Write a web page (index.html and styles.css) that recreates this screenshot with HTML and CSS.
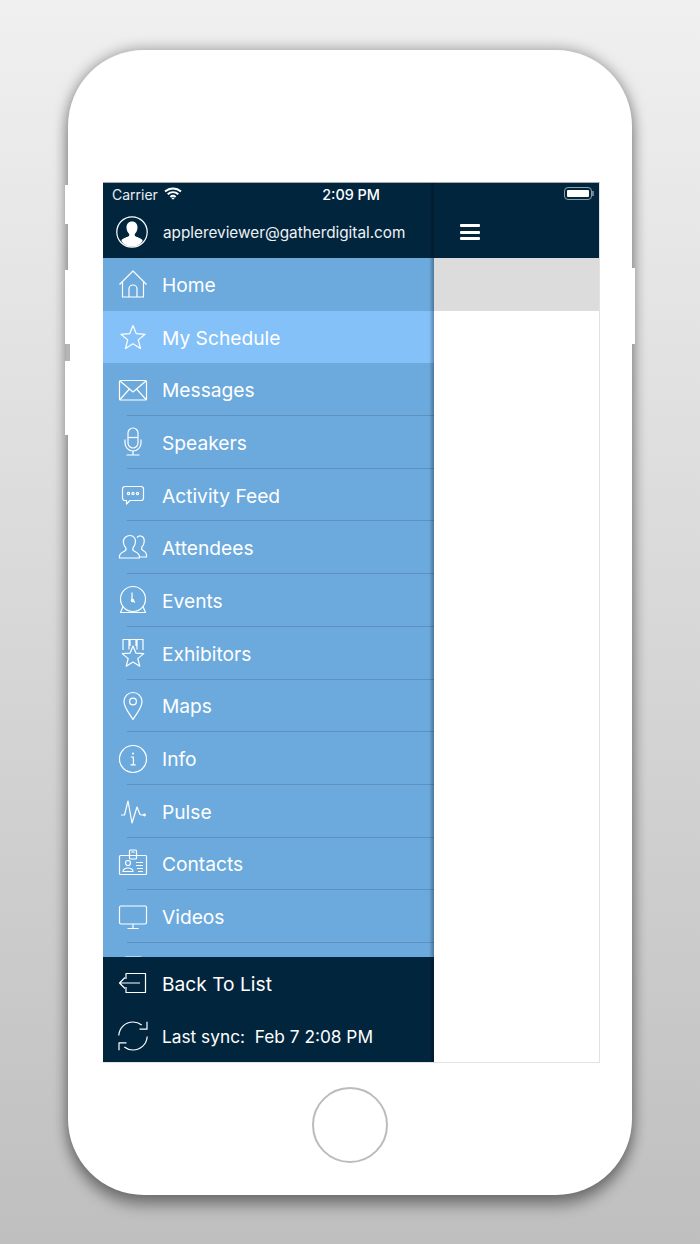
FILE: index.html
```html
<!DOCTYPE html>
<html lang="en">
<head>
  <meta charset="UTF-8" />
  <meta name="viewport" content="width=device-width, initial-scale=1.0"/>
  <title>Gather Digital menu</title>
  <link rel="stylesheet" href="styles.css">
</head>
<body>

<div class="phone">
  <span class="side-btn btn-mute"></span>
  <span class="side-btn btn-up"></span>
  <span class="side-btn btn-gap"></span>
  <span class="side-btn btn-down"></span>
  <span class="side-btn btn-power"></span>

  <div class="screen">

    <div class="drawer">
      <div class="drawer-head">
        <div class="status">
          <span>Carrier</span>
          <svg class="wifi" viewBox="0 0 18 13"><path d="M1 4.600C5.600.4 12.400.4 17 4.600" /><path d="M3.700 7.300c3.100-2.800 7.500-2.800 10.600 0" /><path d="M6.400 9.900c1.500-1.300 3.700-1.300 5.200 0" /><path class="fill" d="M9 12.800l-1.600-1.700c1-.7 2.200-.7 3.200 0z" /></svg>
          <span class="time">2:09 PM</span>
        </div>
        <div class="user">
          <svg class="avatar" viewBox="0 0 32 32"><circle class="ring" cx="16" cy="16" r="15.200" /><path class="fill" d="M16 5.500c-3.500 0-5.700 2.700-5.500 6.300.1 2.500 1.100 4.700 2.500 6 .5.700.4 1.900-.4 2.400-2 1.100-6.300 2-7.100 4.100-.1.400 0 1 .4 1.400C8.200 29.200 12 30.800 16 30.800s7.800-1.600 10.100-5.100c.4-.4.500-1 .4-1.400-.8-2.100-5.100-3-7.100-4.100-.8-.5-.9-1.700-.4-2.400 1.400-1.300 2.400-3.500 2.500-6 .2-3.600-2-6.300-5.500-6.300z" /></svg>
          <span>applereviewer@gatherdigital.com</span>
        </div>
      </div>

      <ul class="menu">
        <li class="item plain">
          <svg class="icon" viewBox="0 0 30 30"><path d="M1.500 15.500L15 2l13.500 13.500" /><path d="M4.500 12.500v15.500h21V12.500" /><path d="M11 28V20a4 4 0 0 1 8 0v8" /></svg>
          <span>Home</span>
        </li>
        <li class="item plain active">
          <svg class="icon" viewBox="0 0 30 30"><path d="M15 3.500l3.300 8.200 8.800.6-6.800 5.600 2.200 8.600-7.500-4.700-7.500 4.700 2.200-8.600-6.800-5.600 8.800-.6z" /></svg>
          <span>My Schedule</span>
        </li>
        <li class="item">
          <svg class="icon" viewBox="0 0 30 30"><rect x="1.500" y="5.500" width="27" height="19.500" rx="1" /><path d="M2 6l13 11L28 6" /><path d="M2 24.500l9.500-10.500M28 24.500L18.500 14" /></svg>
          <span>Messages</span>
        </li>
        <li class="item">
          <svg class="icon" viewBox="0 0 30 30"><rect x="10" y="1" width="10" height="20" rx="5" /><path d="M10 10.500h10" /><path d="M7 12.500v3.500a8 8 0 0 0 16 0v-3.500" /><path d="M15 24v4M8.500 28h13" /></svg>
          <span>Speakers</span>
        </li>
        <li class="item">
          <svg class="icon" viewBox="0 0 30 30"><path d="M7 6.500h16a2.500 2.500 0 0 1 2.500 2.500v9A2.500 2.500 0 0 1 23 20.500H12l-3.500 3.500v-3.500H7A2.500 2.500 0 0 1 4.500 18V9A2.500 2.500 0 0 1 7 6.500z" /><circle cx="10.500" cy="13.500" r="1.100" /><circle cx="15" cy="13.500" r="1.100" /><circle cx="19.500" cy="13.500" r="1.100" /></svg>
          <span>Activity Feed</span>
        </li>
        <li class="item">
          <svg class="icon" viewBox="0 0 30 30"><path d="M19 4.500c1-1.200 2.400-1.800 3.800-1.500 3 .5 3.800 3.500 3.300 6.500-.3 2-1.200 3.800-2.300 4.800-.5 1.200-.2 2.400 1 3 1.400.8 3.400 2 3.700 4.200v2.500h-7" /><path d="M12 2.500c3.700 0 5.900 3 5.400 7-.3 2.300-1.200 4-2.300 5.200-.6 1.300-.2 2.700 1 3.400 2 1.100 4.700 2.200 5.200 4.400V25H1.500v-2.500c.5-2.200 3.200-3.300 5.200-4.400 1.200-.7 1.600-2.100 1-3.400C6.600 13.500 5.700 11.800 5.400 9.500c-.5-4 2.900-7 6.600-7z" /></svg>
          <span>Attendees</span>
        </li>
        <li class="item">
          <svg class="icon" viewBox="0 0 30 30"><circle cx="15" cy="14" r="12.500" /><path d="M5 21.500L2.500 27.500h25L25 21.500" /><path d="M14 7.500v7.500l3 2.500" /><circle cx="14.500" cy="15.500" r="1.200" /></svg>
          <span>Events</span>
        </li>
        <li class="item">
          <svg class="icon" viewBox="0 0 30 30"><path d="M15 8l2.900 7.100 7.900.5-6 5 2 7.600-6.800-4.200-6.800 4.200 2-7.600-6-5 7.900-.5z" /><path d="M5 12V1.500h6v10M12 8V1.500h6V8M19 11.500V1.500h6V12" /></svg>
          <span>Exhibitors</span>
        </li>
        <li class="item">
          <svg class="icon" viewBox="0 0 30 30"><path d="M15 28.500C11.500 22.500 6 17 6 10.500a9 9 0 0 1 18 0c0 6.500-5.500 12-9 18z" /><circle cx="15" cy="10.500" r="3.400" /></svg>
          <span>Maps</span>
        </li>
        <li class="item">
          <svg class="icon" viewBox="0 0 30 30"><circle cx="15" cy="15" r="13.500" /><path d="M12.800 13h2.600v7.500M12.500 20.800h5.200" /><path class="dot" d="M15 8.800v1.500" /></svg>
          <span>Info</span>
        </li>
        <li class="item">
          <svg class="icon" viewBox="0 0 30 30"><path d="M3 19h3.500L10 5l4 22 5-16 3 7.500 1.500.5h3" /><circle class="fill" cx="26.500" cy="19" r="1.400" /></svg>
          <span>Pulse</span>
        </li>
        <li class="item">
          <svg class="icon" viewBox="0 0 30 30"><rect x="1.500" y="6.500" width="27" height="19" rx="1" /><rect x="11.500" y="1" width="7" height="9" rx="1" /><path d="M13.500 3h3" /><circle cx="10" cy="14" r="2.500" /><path d="M5 22.500c.2-2.500 2-3.500 5-3.500s4.800 1 5 3.500z" /><path d="M18 13.500h7M18 16.500h7M19 19.500h6M20 22.500h5" /></svg>
          <span>Contacts</span>
        </li>
        <li class="item">
          <svg class="icon" viewBox="0 0 30 30"><rect x="1.500" y="4" width="27" height="18" rx="1.500" /><path d="M15 22v4M9.500 26.500h11" /></svg>
          <span>Videos</span>
        </li>
        <li class="item">
          <svg class="icon" viewBox="0 0 30 30"><path d="M8 3h14a2 2 0 0 1 2 2v20H6V5a2 2 0 0 1 2-2z" /></svg>
        </li>
      </ul>

      <div class="drawer-foot">
        <div class="item foot-row">
          <svg class="icon" viewBox="0 0 30 30"><path d="M8 11V5.500h19.500v19H8V19" /><path d="M22 15H1.500M7 9.500L1.500 15 7 20.500" /></svg>
          <span>Back To List</span>
        </div>
        <div class="item foot-row sync">
          <svg class="icon" viewBox="0 0 30 30"><path d="M.8 14.500C1.200 6.800 7.400 1 15 1c3.300 0 6.300 1.100 8.700 3M29.200 15.500C28.800 23.200 22.600 29 15 29c-3.300 0-6.300-1.100-8.700-3" /><path d="M29 .8L29 8.200h-7.500M1 29.200L1 21.800h7.500" /></svg>
          <span>Last sync:&nbsp; Feb 7 2:08 PM</span>
        </div>
      </div>
    </div>

    <div class="content">
      <div class="content-head">
        <div class="battery"><span class="battery-level"></span></div>
        <div class="burger"><span></span><span></span><span></span></div>
      </div>
      <div class="content-row"></div>
    </div>

  </div>

  <div class="home-btn"></div>
</div>

</body>
</html>
```

FILE: styles.css
```css
:root {
  --navy: #02253e;
  --blue: #6caadd;
  --blue-on: #85c1f9;
  --line: #5e90bd;
}
* {
  box-sizing: border-box;
}
body {
  margin: 0;
  height: 1244px;
  overflow: hidden;
  font-family: Inter, 'Open Sans', sans-serif;
  background: linear-gradient(#f0f0f0, #bfbfbf);
  color: #fff;
}

/* phone frame */
.phone {
  position: relative;
  width: 564px;
  height: 1145px;
  margin: 50px 0 0 68px;
  padding: 132px 33px 0 35px;
  background: #fff;
  border-radius: 76px;
  box-shadow: 0 12px 14px 0 rgba(0,0,0,0.28), 0 0 14px 1px rgba(0,0,0,0.34);
}
.side-btn {
  position: absolute;
  width: 3px;
  background: #fff;
}
.btn-mute { left: -3px; top: 135px; height: 39px; }
.btn-up { left: -3px; top: 220px; height: 74px; }
.btn-gap { left: -2px; top: 294px; width: 4px; height: 17px; background: #b4b4b4; }
.btn-down { left: -3px; top: 311px; height: 74px; }
.btn-power { right: -3px; top: 218px; height: 76px; }
.home-btn {
  position: absolute;
  left: 244px;
  top: 1037px;
  width: 76px;
  height: 76px;
  border: 2px solid #bcbcbc;
  border-radius: 50%;
}

/* screen */
.screen {
  display: flex;
  width: 497px;
  height: 881px;
  background: #fff;
  border: 1px solid #e2e2e2;
  border-top-color: #a9a9a9;
  border-left: 0;
}
.drawer {
  position: relative;
  display: flex;
  flex-direction: column;
  width: 331px;
  background: var(--blue);
}
.drawer::after {
  content: '';
  position: absolute;
  top: 0;
  right: 0;
  bottom: 0;
  width: 5px;
  background: linear-gradient(to right, rgba(0,0,0,0), rgba(0,0,0,0.3));
  pointer-events: none;
}
.drawer-head {
  height: 75px;
  background: var(--navy);
}
.status {
  display: flex;
  align-items: center;
  height: 22px;
  padding: 0 0 0 9px;
  font-size: 14px;
  color: #e8edf1;
}
.wifi {
  width: 18px;
  height: 13px;
  margin: -2px 0 0 6px;
  fill: none;
  stroke: #fff;
  stroke-width: 2;
}
.wifi .fill {
  fill: #fff;
  stroke: none;
}
.time {
  margin-left: auto;
  margin-right: 54px;
  font-size: 14.400px;
  font-weight: 500;
  color: #fff;
}
.user {
  display: flex;
  align-items: center;
  gap: 15px;
  padding: 11px 0 0 13px;
  font-size: 15.300px;
  color: #eef2f5;
}
.avatar {
  width: 32px;
  height: 32px;
  flex: none;
}
.avatar .ring {
  fill: none;
  stroke: #fff;
  stroke-width: 1.200;
}
.avatar .fill {
  fill: #fff;
}

/* menu */
.menu {
  flex: 1;
  margin: 0;
  padding: 0;
  list-style: none;
  overflow: hidden;
}
.item {
  position: relative;
  display: flex;
  align-items: center;
  gap: 14px;
  height: 52.700px;
  padding-left: 15px;
  font-size: 19.200px;
}
.item span {
  padding-top: 1px;
}
.item::after {
  content: '';
  position: absolute;
  left: 24px;
  right: 0;
  bottom: 0;
  height: 1px;
  background: var(--line);
}
.item.plain::after,
.foot-row::after {
  display: none;
}
.active {
  background: var(--blue-on);
}
.icon {
  width: 30px;
  height: 30px;
  flex: none;
  fill: none;
  stroke: #fff;
  stroke-width: 1.200;
  stroke-linejoin: round;
}
.icon .fill {
  fill: #fff;
  stroke: none;
}
.icon .dot {
  stroke-width: 2;
}
.drawer-foot {
  height: 105px;
  background: var(--navy);
}
.foot-row {
  height: 52.500px;
}
.sync {
  font-size: 17.300px;
}

/* right side */
.content {
  flex: 1;
}
.content-head {
  height: 75px;
  padding: 4px 7px 0 26px;
  background: var(--navy);
}
.battery {
  position: relative;
  width: 28px;
  height: 13px;
  margin-left: auto;
  padding: 2px;
  border: 1px solid #8fa0ad;
  border-radius: 4px;
}
.battery::after {
  content: '';
  position: absolute;
  right: -3px;
  top: 3px;
  width: 2px;
  height: 5px;
  background: #6f818f;
}
.battery-level {
  display: block;
  height: 100%;
  background: #fff;
  border-radius: 1px;
}
.burger {
  display: flex;
  flex-direction: column;
  gap: 3.500px;
  width: 20px;
  margin-top: 24px;
}
.burger span {
  height: 3px;
  background: #fff;
  border-radius: 1px;
}
.content-row {
  height: 53px;
  background: #dcdcdc;
}
```
